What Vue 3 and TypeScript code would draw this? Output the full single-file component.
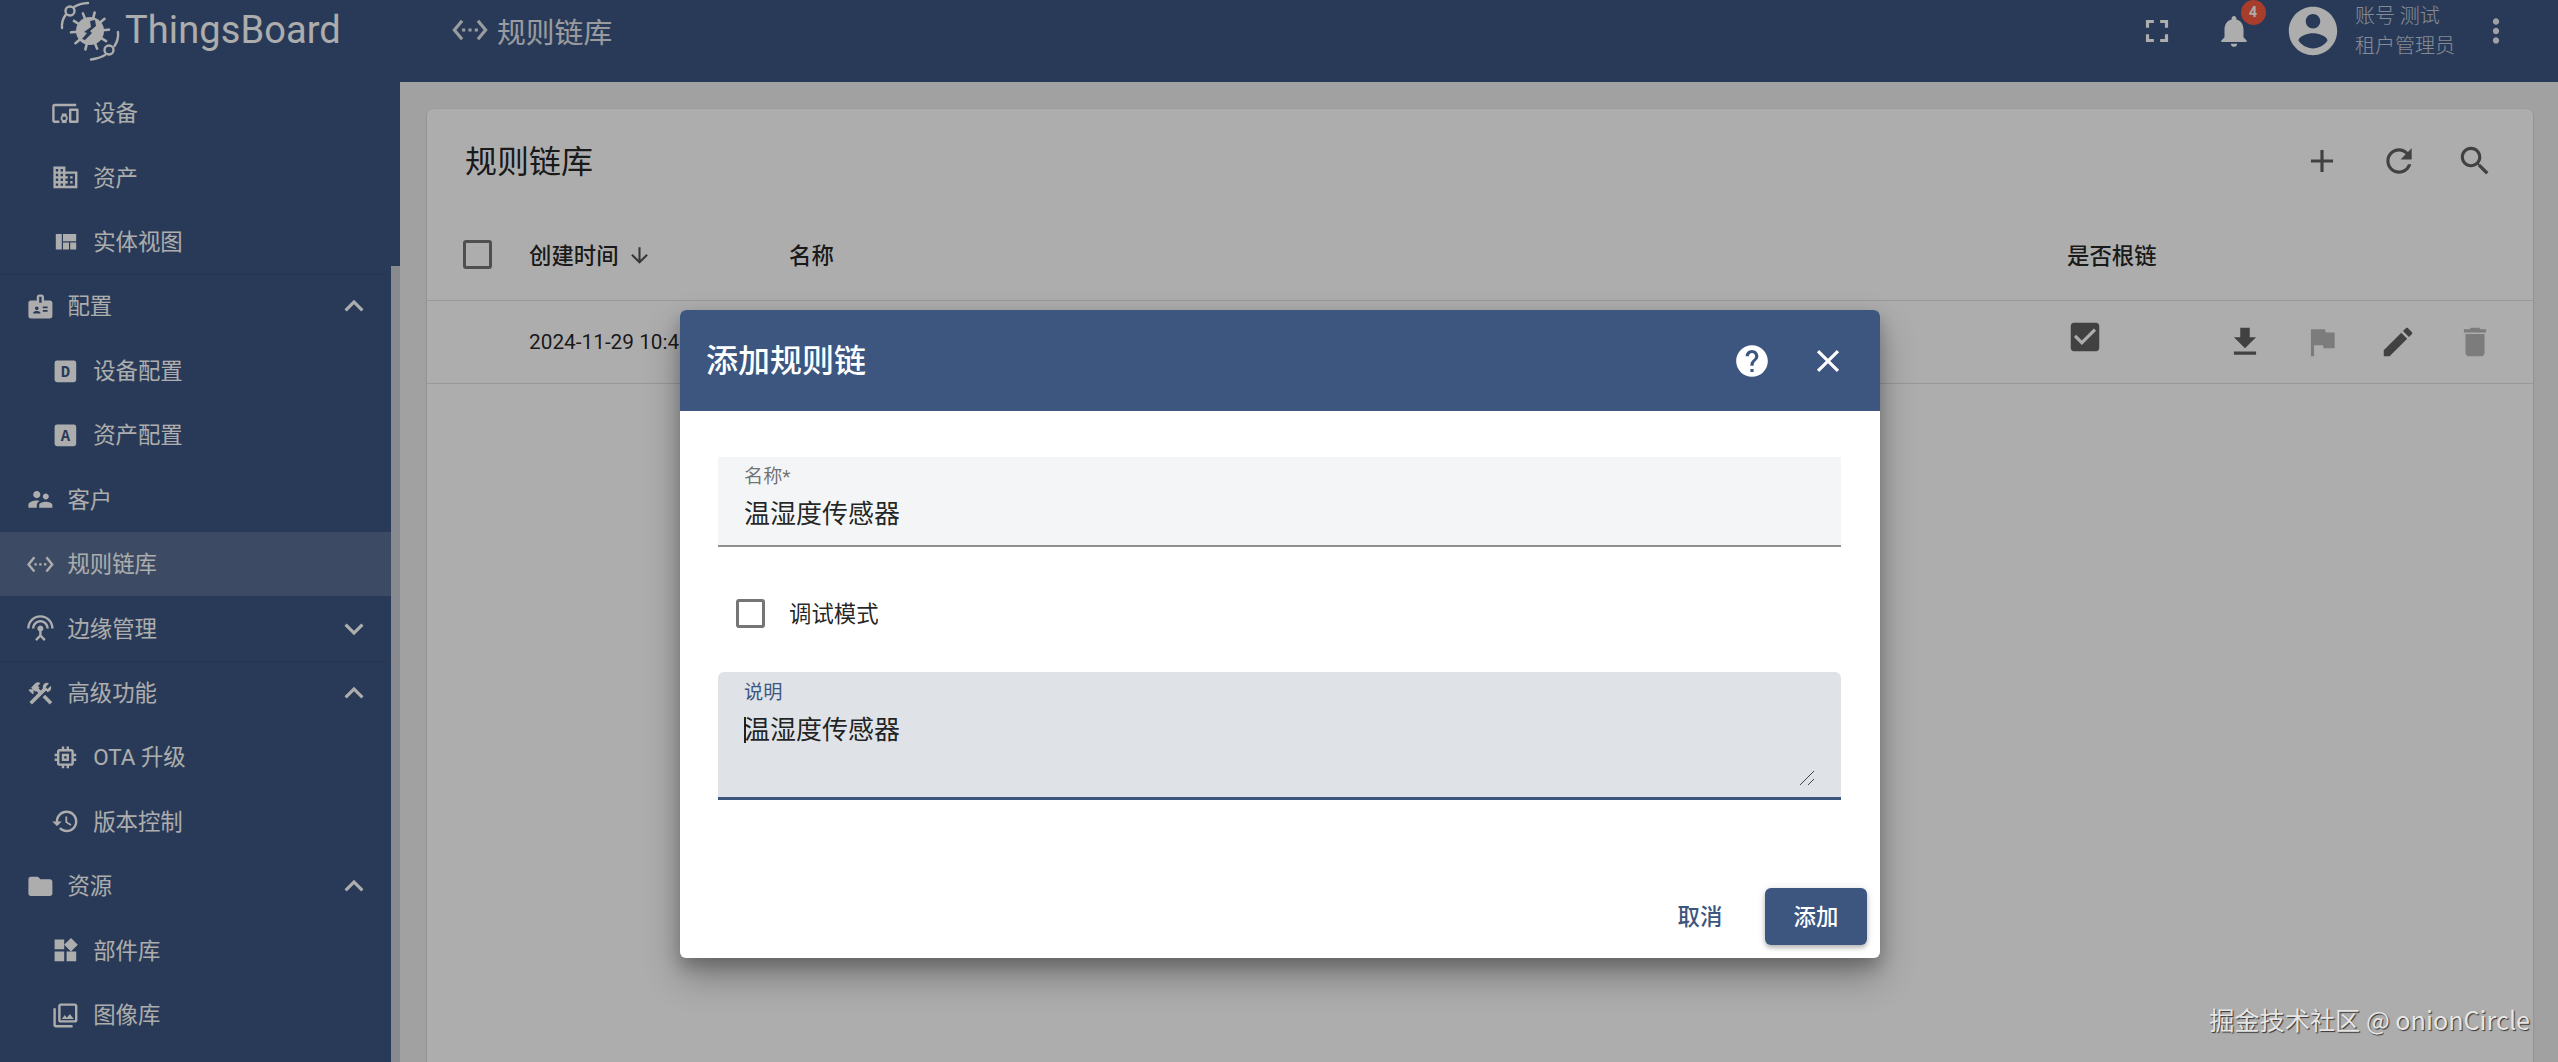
<script setup lang="ts">
interface NavItem {
  label: string
  icon?: string
  letter?: string
  sub?: boolean
  active?: boolean
  chevron?: 'up' | 'down'
  divider?: boolean
}

const CHEVRON_UP = 'M7.41 15.41L12 10.83l4.59 4.58L18 14l-6-6-6 6z'
const CHEVRON_DOWN = 'M7.41 8.59L12 13.17l4.59-4.58L18 10l-6 6-6-6 1.41-1.41z'
const RULE_CHAIN = 'M7.77 6.76L6.23 5.48.82 12l5.41 6.52 1.54-1.28L3.42 12l4.35-5.24zM7 13h2v-2H7v2zm10-2h-2v2h2v-2zm-6 2h2v-2h-2v2zm6.77-7.52l-1.54 1.28L20.58 12l-4.35 5.24 1.54 1.28L23.18 12l-5.41-6.52z'

const nav: NavItem[] = [
  { label: '设备', sub: true, icon: 'M3 6h18V4H3c-1.1 0-2 .9-2 2v12c0 1.1.9 2 2 2h4v-2H3V6zm10 6H9v1.78c-.61.55-1 1.33-1 2.22s.39 1.67 1 2.22V20h4v-1.78c.61-.55 1-1.34 1-2.22s-.39-1.67-1-2.22V12zm-2 5.5c-.83 0-1.5-.67-1.5-1.5s.67-1.5 1.5-1.5 1.5.67 1.5 1.5-.67 1.5-1.5 1.5zM22 8h-6c-.5 0-1 .5-1 1v10c0 .5.5 1 1 1h6c.5 0 1-.5 1-1V9c0-.5-.5-1-1-1zm-1 10h-4v-8h4v8z' },
  { label: '资产', sub: true, icon: 'M12 7V3H2v18h20V7H12zM6 19H4v-2h2v2zm0-4H4v-2h2v2zm0-4H4V9h2v2zm0-4H4V5h2v2zm4 12H8v-2h2v2zm0-4H8v-2h2v2zm0-4H8V9h2v2zm0-4H8V5h2v2zm10 12h-8v-2h2v-2h-2v-2h2v-2h-2V9h8v10zm-2-8h-2v2h2v-2zm0 4h-2v2h2v-2z' },
  { label: '实体视图', sub: true, icon: 'M10 18h5v-6h-5v6zm-6 0h5V5H4v13zm12 0h5v-6h-5v6zM10 5v6h11V5H10z' },
  { label: '配置', chevron: 'up', divider: true, icon: 'M20 7h-5V4c0-1.1-.9-2-2-2h-2c-1.1 0-2 .9-2 2v3H4c-1.1 0-2 .9-2 2v11c0 1.1.9 2 2 2h16c1.1 0 2-.9 2-2V9c0-1.1-.9-2-2-2zM9 12c.83 0 1.5.67 1.5 1.5S9.83 15 9 15s-1.5-.67-1.5-1.5S8.17 12 9 12zm3 6H6v-.75c0-1 2-1.5 3-1.5s3 .5 3 1.5V18zm1-9h-2V4h2v5zm5 7.5h-4V15h4v1.5zm0-3h-4V12h4v1.5z' },
  { label: '设备配置', sub: true, letter: 'D' },
  { label: '资产配置', sub: true, letter: 'A' },
  { label: '客户', icon: 'M16.5 12c1.38 0 2.49-1.12 2.49-2.5S17.88 7 16.5 7 14 8.12 14 9.5s1.12 2.5 2.5 2.5zM9 11c1.66 0 2.99-1.34 2.99-3S10.66 5 9 5 6 6.34 6 8s1.34 3 3 3zm7.5 3c-1.83 0-5.5.92-5.5 2.75V19h11v-2.25c0-1.83-3.67-2.75-5.5-2.75zM9 13c-2.33 0-7 1.17-7 3.5V19h7v-2.25c0-.85.33-2.34 2.37-3.47C10.5 13.1 9.66 13 9 13z' },
  { label: '规则链库', active: true, icon: RULE_CHAIN },
  { label: '边缘管理', chevron: 'down', icon: 'M12 5c-3.87 0-7 3.13-7 7h2c0-2.76 2.24-5 5-5s5 2.24 5 5h2c0-3.87-3.13-7-7-7zm1 9.29c.88-.39 1.5-1.26 1.5-2.29 0-1.38-1.12-2.5-2.5-2.5S9.5 10.62 9.5 12c0 1.02.62 1.9 1.5 2.29v3.3L7.59 21 9 22.41l3-3 3 3L16.41 21 13 17.59v-3.3zM12 1C5.93 1 1 5.93 1 12h2c0-4.97 4.03-9 9-9s9 4.03 9 9h2c0-6.07-4.93-11-11-11z' },
  { label: '高级功能', chevron: 'up', divider: true, icon: 'M13.78 15.3l6 6 2.11-2.16-6-6zM17.5 10.1c-.39 0-.81-.05-1.14-.19L4.97 21.25l-2.11-2.11 7.41-7.4L8.5 9.96l-.72.7-1.45-1.41v2.86l-.7.7-3.52-3.52.7-.7h2.81L4.22 7.2l3.56-3.56c1.17-1.17 3.05-1.17 4.22 0L9.89 5.74l1.41 1.41-.72.72 1.79 1.76 1.81-1.88c-.14-.33-.2-.75-.2-1.12 0-1.97 1.53-3.5 3.52-3.5.59 0 1.11.14 1.58.42L16.41 6.93l1.5 1.5 2.67-2.67c.28.47.42.97.42 1.6 0 1.95-1.53 3.74-3.5 3.74z' },
  { label: 'OTA 升级', sub: true, icon: 'M15 9H9v6h6V9zm-2 4h-2v-2h2v2zm8-2V9h-2V7c0-1.1-.9-2-2-2h-2V3h-2v2h-2V3H9v2H7c-1.1 0-2 .9-2 2v2H3v2h2v2H3v2h2v2c0 1.1.9 2 2 2h2v2h2v-2h2v2h2v-2h2c1.1 0 2-.9 2-2v-2h2v-2h-2v-2h2zm-4 6H7V7h10v10z' },
  { label: '版本控制', sub: true, icon: 'M13 3c-4.97 0-9 4.03-9 9H1l3.89 3.89.07.14L9 12H6c0-3.87 3.13-7 7-7s7 3.13 7 7-3.13 7-7 7c-1.93 0-3.68-.79-4.94-2.06l-1.42 1.42C8.27 19.99 10.51 21 13 21c4.97 0 9-4.03 9-9s-4.03-9-9-9zm-1 5v5l4.28 2.54.72-1.21-3.5-2.08V8H12z' },
  { label: '资源', chevron: 'up', icon: 'M10 4H4c-1.1 0-1.99.9-1.99 2L2 18c0 1.1.9 2 2 2h16c1.1 0 2-.9 2-2V8c0-1.1-.9-2-2-2h-8l-2-2z' },
  { label: '部件库', sub: true, icon: 'M13 13v8h8v-8h-8zM3 21h8v-8H3v8zM3 3v8h8V3H3zm13.66-1.31L11 7.34 16.66 13l5.66-5.66-5.66-5.65z' },
  { label: '图像库', sub: true, icon: 'M20 4v12H8V4h12m0-2H8c-1.1 0-2 .9-2 2v12c0 1.1.9 2 2 2h12c1.1 0 2-.9 2-2V4c0-1.1-.9-2-2-2zm-8.5 9.67l1.69 2.26 2.48-3.1L19 15H9zM2 6v14c0 1.1.9 2 2 2h14v-2H4V6H2z' },
]

const ic = {
  fullscreen: 'M7 14H5v5h5v-2H7v-3zm-2-4h2V7h3V5H5v5zm12 7h-3v2h5v-5h-2v3zM14 5v2h3v3h2V5h-5z',
  bell: 'M12 22c1.1 0 2-.9 2-2h-4c0 1.1.89 2 2 2zm6-6v-5c0-3.07-1.64-5.64-4.5-6.32V4c0-.83-.67-1.5-1.5-1.5s-1.5.67-1.5 1.5v.68C7.63 5.36 6 7.92 6 11v5l-2 2v1h16v-1l-2-2z',
  account: 'M12 2C6.48 2 2 6.48 2 12s4.48 10 10 10 10-4.48 10-10S17.52 2 12 2zm0 3c1.66 0 3 1.34 3 3s-1.34 3-3 3-3-1.34-3-3 1.34-3 3-3zm0 14.2c-2.5 0-4.71-1.28-6-3.22.03-1.99 4-3.08 6-3.08 1.99 0 5.97 1.09 6 3.08-1.29 1.94-3.5 3.22-6 3.22z',
  more: 'M12 8c1.1 0 2-.9 2-2s-.9-2-2-2-2 .9-2 2 .9 2 2 2zm0 2c-1.1 0-2 .9-2 2s.9 2 2 2 2-.9 2-2-.9-2-2-2zm0 6c-1.1 0-2 .9-2 2s.9 2 2 2 2-.9 2-2-.9-2-2-2z',
  add: 'M19 13h-6v6h-2v-6H5v-2h6V5h2v6h6v2z',
  refresh: 'M17.65 6.35C16.2 4.9 14.21 4 12 4c-4.42 0-7.99 3.58-7.99 8s3.57 8 7.99 8c3.73 0 6.84-2.55 7.73-6h-2.08c-.82 2.33-3.04 4-5.65 4-3.31 0-6-2.69-6-6s2.69-6 6-6c1.66 0 3.14.69 4.22 1.78L13 11h7V4l-2.35 2.35z',
  search: 'M15.5 14h-.79l-.28-.27C15.41 12.59 16 11.11 16 9.5 16 5.91 13.09 3 9.5 3S3 5.91 3 9.5 5.91 16 9.5 16c1.61 0 3.09-.59 4.23-1.57l.27.28v.79l5 4.99L20.49 19l-4.99-5zm-6 0C7.01 14 5 11.99 5 9.5S7.01 5 9.5 5 14 7.01 14 9.5 11.99 14 9.5 14z',
  arrow: 'M20 12l-1.41-1.41L13 16.17V4h-2v12.17l-5.58-5.59L4 12l8 8 8-8z',
  checked: 'M19 3H5c-1.11 0-2 .9-2 2v14c0 1.1.89 2 2 2h14c1.11 0 2-.9 2-2V5c0-1.1-.89-2-2-2zm-9 14l-5-5 1.41-1.41L10 14.17l7.59-7.59L19 8l-9 9z',
  help: 'M12 2C6.48 2 2 6.48 2 12s4.48 10 10 10 10-4.48 10-10S17.52 2 12 2zm1 17h-2v-2h2v2zm2.07-7.75l-.9.92C13.45 12.9 13 13.5 13 15h-2v-.5c0-1.1.45-2.1 1.17-2.83l1.24-1.26c.37-.36.59-.86.59-1.41 0-1.1-.9-2-2-2s-2 .9-2 2H8c0-2.21 1.79-4 4-4s4 1.79 4 4c0 .88-.36 1.68-.93 2.25z',
  close: 'M19 6.41L17.59 5 12 10.59 6.41 5 5 6.41 10.59 12 5 17.59 6.41 19 12 13.41 17.59 19 19 17.59 13.41 12z',
}

const headActions = [ic.add, ic.refresh, ic.search]
const rowActions = [
  { d: 'M19 9h-4V3H9v6H5l7 7 7-7zM5 18v2h14v-2H5z', off: false },
  { d: 'M14.4 6L14 4H5v17h2v-7h5.6l.4 2h7V6z', off: true },
  { d: 'M3 17.25V21h3.75L17.81 9.94l-3.75-3.75L3 17.25zM20.71 7.04c.39-.39.39-1.02 0-1.41l-2.34-2.34c-.39-.39-1.02-.39-1.41 0l-1.83 1.83 3.75 3.75 1.83-1.83z', off: false },
  { d: 'M6 19c0 1.1.9 2 2 2h8c1.1 0 2-.9 2-2V7H6v12zM19 4h-3.5l-1-1h-5l-1 1H5v2h14V4z', off: true },
]

// gear spikes of the logo, drawn around the body centre
const spikes = Array.from({ length: 10 }, (_, i) => i * 36 + 14)
</script>

<template>
  <div class="page">
    <aside class="sidebar">
      <div class="logo">
        <svg class="logo-mark" viewBox="0 0 70 64">
          <g fill="none" stroke="currentColor" stroke-linecap="round">
            <path d="M7 28c-.5-5 .8-9 3.500-13M19 7c4-2.500 9-3.800 14-4" stroke-width="2.400" />
            <circle cx="15" cy="11" r="4.500" stroke-width="2.400" />
            <path d="M63 32c.5 5-.8 10-3.500 14M50 55c-4 2.500-9 3.800-14 4.500" stroke-width="2.400" />
            <circle cx="54" cy="50" r="4.500" stroke-width="2.400" />
            <line
              v-for="a in spikes" :key="a"
              x1="35" y1="31" x2="35" y2="12"
              stroke-width="2.600"
              :transform="`rotate(${a} 35 31)`"
            />
          </g>
          <circle cx="35" cy="31" r="14" fill="currentColor" />
          <path d="M40 20l-5 1 1 6-7 5 3 1-5 6 3 1 7-7-2-2 6-5z" fill="#3c5680" />
        </svg>
        <span class="logo-text">ThingsBoard</span>
      </div>
      <nav class="nav">
        <div
          v-for="item in nav" :key="item.label"
          class="nav-row"
          :class="{ 'nav-sub': item.sub, 'nav-active': item.active, 'nav-divider': item.divider }"
        >
          <svg v-if="item.letter" class="nav-icon" viewBox="0 0 24 24">
            <rect x="3" y="3" width="18" height="18" rx="2" fill="currentColor" />
            <text x="12" y="16.400" class="icon-letter">{{ item.letter }}</text>
          </svg>
          <svg v-else class="nav-icon" viewBox="0 0 24 24"><path :d="item.icon" /></svg>
          <span class="nav-label">{{ item.label }}</span>
          <svg v-if="item.chevron" class="icon chevron" viewBox="0 0 24 24">
            <path :d="item.chevron === 'up' ? CHEVRON_UP : CHEVRON_DOWN" />
          </svg>
        </div>
      </nav>
      <div class="scroll-thumb"></div>
    </aside>

    <main class="main">
      <header class="toolbar">
        <div class="crumb">
          <svg class="icon" viewBox="0 0 24 24"><path :d="RULE_CHAIN" /></svg>
          <span>规则链库</span>
        </div>
        <div class="tools">
          <svg class="icon" viewBox="0 0 24 24"><path :d="ic.fullscreen" /></svg>
          <div class="bell">
            <svg class="icon" viewBox="0 0 24 24"><path :d="ic.bell" /></svg>
            <span class="badge">4</span>
          </div>
          <svg class="avatar" viewBox="0 0 24 24"><path :d="ic.account" /></svg>
          <div class="user">
            <span>账号 测试</span>
            <span>租户管理员</span>
          </div>
          <svg class="icon more" viewBox="0 0 24 24"><path :d="ic.more" /></svg>
        </div>
      </header>

      <section class="card">
        <div class="card-head">
          <h1>规则链库</h1>
          <div class="actions">
            <svg v-for="d in headActions" :key="d" class="icon" viewBox="0 0 24 24"><path :d="d" /></svg>
          </div>
        </div>
        <div class="table-row table-head">
          <span class="check"></span>
          <span class="sort">创建时间
            <svg class="sort-arrow" viewBox="0 0 24 24"><path :d="ic.arrow" /></svg>
          </span>
          <span>名称</span>
          <span>是否根链</span>
        </div>
        <div class="table-row table-body">
          <span></span>
          <span>2024-11-29 10:41:18</span>
          <span></span>
          <svg class="icon root-mark" viewBox="0 0 24 24"><path :d="ic.checked" /></svg>
          <div class="actions">
            <svg
              v-for="a in rowActions" :key="a.d"
              class="icon" :class="{ off: a.off }" viewBox="0 0 24 24"
            ><path :d="a.d" /></svg>
          </div>
        </div>
      </section>
    </main>

    <div class="backdrop"></div>

    <div class="dialog-layer">
      <div class="dialog">
        <header class="dialog-head">
          <h2>添加规则链</h2>
          <div class="dialog-tools">
            <svg class="icon" viewBox="0 0 24 24"><path :d="ic.help" /></svg>
            <svg class="icon" viewBox="0 0 24 24"><path :d="ic.close" /></svg>
          </div>
        </header>
        <div class="dialog-body">
          <div class="field">
            <label>名称*</label>
            <div class="value">温湿度传感器</div>
          </div>
          <div class="debug">
            <span class="check"></span>
            <span class="debug-label">调试模式</span>
          </div>
          <div class="field field-area">
            <label>说明</label>
            <div class="value"><i class="caret"></i>温湿度传感器</div>
            <svg class="grip" viewBox="0 0 16 16">
              <path d="M1 15L15 1M9 15l6-6" fill="none" stroke="#444" stroke-width="1" />
            </svg>
          </div>
        </div>
        <footer class="dialog-foot">
          <button class="btn">取消</button>
          <button class="btn btn-primary">添加</button>
        </footer>
      </div>
    </div>

    <div class="watermark">掘金技术社区 @ onionCircle</div>
  </div>
</template>

<style>
html, body { margin: 0; }
</style>

<style scoped>
.page {
  position: relative;
  display: flex;
  width: 2558px;
  height: 1062px;
  overflow: hidden;
  background: #eeeeee;
  font-family: Roboto, "Noto Sans CJK SC", sans-serif;
  color: rgba(0, 0, 0, 0.87);
}

.icon {
  width: 38px;
  height: 38px;
  flex: none;
  fill: currentColor;
}

/* sidebar */
.sidebar {
  position: relative;
  flex: none;
  width: 400px;
  background: #3c5680;
  color: #fff;
  display: flex;
  flex-direction: column;
}
.logo {
  height: 81px;
  flex: none;
  display: flex;
  align-items: flex-start;
  padding-left: 55px;
  box-sizing: border-box;
}
.logo-mark { width: 70px; height: 64px; color: #fff; }
.logo-text {
  font-size: 38px;
  line-height: 61px;
  letter-spacing: 0.1px;
}
.nav { width: 391px; display: flex; flex-direction: column; }
.nav-row {
  position: relative;
  height: 64.430px;
  flex: none;
  display: flex;
  align-items: center;
  gap: 13px;
  padding-left: 25.600px;
  box-sizing: border-box;
}
.nav-sub { padding-left: 51px; gap: 13.400px; }
.nav-icon { width: 28.800px; height: 28.800px; flex: none; fill: currentColor; }
.nav-active { background: rgba(255, 255, 255, 0.15); }
.nav-divider::before {
  content: "";
  position: absolute;
  left: 0;
  right: 6px;
  top: 0;
  height: 1px;
  background: rgba(0, 0, 0, 0.1);
}
.nav-label { font-size: 22.400px; line-height: 30px; }
.chevron { margin-left: auto; margin-right: 18px; }
.icon-letter {
  font-family: "Liberation Mono", monospace;
  font-size: 13px;
  font-weight: 700;
  text-anchor: middle;
  fill: #3c5680;
}
.scroll-thumb {
  position: absolute;
  right: 0;
  top: 266px;
  bottom: 0;
  width: 9px;
  background: #c8ccd2;
}

/* toolbar */
.main { flex: 1; min-width: 0; display: flex; flex-direction: column; }
.toolbar {
  flex: none;
  height: 82px;
  background: #3c5680;
  color: #fff;
  display: flex;
  justify-content: space-between;
  padding-bottom: 20px;
  box-sizing: border-box;
  align-items: center;
}
.crumb {
  display: flex;
  align-items: center;
  gap: 8px;
  margin-left: 51px;
  padding-bottom: 2px;
  font-size: 28.800px;
  opacity: 0.85;
}
.tools { display: flex; align-items: center; margin-right: 43px; }
.tools > .icon:first-child { margin-right: 39px; }
.bell { position: relative; width: 38px; height: 38px; margin-right: 31px; }
.badge {
  position: absolute;
  left: 25.500px;
  top: -12.500px;
  width: 25px;
  height: 25px;
  border-radius: 50%;
  background: #f85a42;
  font-size: 14px;
  font-weight: 700;
  line-height: 25px;
  text-align: center;
}
.avatar { width: 58px; height: 58px; fill: currentColor; margin-right: 13px; }
.user {
  display: flex;
  flex-direction: column;
  width: 120px;
  font-size: 20px;
  font-weight: 300;
  line-height: 30px;
  opacity: 0.7;
  margin-right: 2px;
}
.more { opacity: 0.9; }

/* card + table */
.card {
  flex: 1;
  margin: 27px 25px 0 27px;
  background: #fff;
  border-radius: 6px 6px 0 0;
  box-shadow: 0 1px 3px rgba(0, 0, 0, 0.2);
  min-height: 0;
}
.card-head {
  height: 104px;
  padding: 0 39px 0 38px;
  box-sizing: border-box;
  display: flex;
  align-items: center;
  justify-content: space-between;
}
.card-head h1 { margin: 0 0 5px; font-size: 32px; font-weight: 400; }
.actions { display: flex; gap: 38.500px; color: rgba(0, 0, 0, 0.62); }
.off { opacity: 0.45; }
.table-row {
  display: grid;
  grid-template-columns: 66px 260px 1278px 159px 1fr;
  align-items: center;
  padding-left: 36px;
  box-sizing: border-box;
  border-bottom: 1px solid rgba(0, 0, 0, 0.12);
  font-size: 22.400px;
}
.table-head { height: 88px; padding-bottom: 5px; font-weight: 500; }
.table-body { height: 83px; font-size: 20.800px; }
.table-body > span:nth-child(2) { white-space: nowrap; }
.sort { display: flex; align-items: center; gap: 8px; }
.sort-arrow { width: 25px; height: 25px; fill: rgba(0, 0, 0, 0.68); margin-top: 2px; }
.root-mark { color: rgba(0, 0, 0, 0.62); margin: 0 0 10px -1px; }
.check {
  display: block;
  width: 29px;
  height: 29px;
  box-sizing: border-box;
  border: 3px solid rgba(0, 0, 0, 0.54);
  border-radius: 3px;
}

/* dialog */
.backdrop {
  position: absolute;
  inset: 0;
  background: rgba(0, 0, 0, 0.32);
}
.dialog-layer {
  position: absolute;
  inset: 0;
  display: flex;
  justify-content: center;
  align-items: flex-start;
  padding: 310px 0 0 2px;
  box-sizing: border-box;
}
.dialog {
  width: 1200px;
  height: 648px;
  background: #fff;
  border-radius: 6px;
  overflow: hidden;
  display: flex;
  flex-direction: column;
  box-shadow: 0 18px 36px rgba(0, 0, 0, 0.3), 0 8px 16px rgba(0, 0, 0, 0.2);
}
.dialog-head {
  flex: none;
  height: 101px;
  background: #3c5680;
  color: #fff;
  display: flex;
  align-items: center;
  justify-content: space-between;
  padding: 0 33px 0 26px;
}
.dialog-head h2 { margin: 0 0 5px; font-size: 32px; font-weight: 500; }
.dialog-tools { display: flex; gap: 38px; }
.dialog-body { padding: 46px 39px 0 38px; }
.field {
  position: relative;
  height: 90px;
  box-sizing: border-box;
  padding: 10px 0 0 26px;
  background: #f3f5f6;
  border-bottom: 2px solid #8f8f8f;
}
.field label {
  display: block;
  font-size: 19.200px;
  line-height: 20px;
  color: rgba(0, 0, 0, 0.55);
}
.value {
  margin-top: 12px;
  font-size: 26px;
  line-height: 30px;
  color: rgba(0, 0, 0, 0.87);
}
.debug {
  display: flex;
  align-items: center;
  gap: 24px;
  padding-left: 18px;
  margin: 52px 0 44px;
  height: 29px;
  font-size: 22.400px;
}
.debug-label { margin-top: -3px; }
.debug .check { border-color: #757575; }
.field-area {
  height: 128px;
  padding-top: 11px;
  background: #dfe3e7;
  border-bottom: 3px solid #3c5680;
  border-radius: 6px 6px 0 0;
}
.field-area label { color: #3c5680; }
.caret {
  display: inline-block;
  width: 1.500px;
  height: 26px;
  margin-right: -1.500px;
  vertical-align: -4px;
  background: #222;
}
.grip { position: absolute; right: 26px; bottom: 11px; width: 16px; height: 16px; }
.dialog-foot {
  margin-top: auto;
  display: flex;
  justify-content: flex-end;
  align-items: center;
  gap: 14px;
  padding: 0 13px 13px 0;
}
.btn {
  height: 57px;
  width: 102px;
  border: 0;
  border-radius: 6px;
  background: transparent;
  font: 500 22.400px Roboto, "Noto Sans CJK SC", sans-serif;
  color: #3c5680;
  padding: 0 0 3px;
}
.btn-primary {
  color: #fff;
  background: #3c5680;
  box-shadow: 0 3px 4px rgba(0, 0, 0, 0.22), 0 1px 8px rgba(0, 0, 0, 0.12);
}

.watermark {
  position: absolute;
  right: 28px;
  top: 1001px;
  font-family: "Noto Sans CJK SC", sans-serif;
  font-size: 25.200px;
  line-height: 36px;
  color: #e6e6e6;
  text-shadow: 1px 1px 1px #333;
}
</style>
